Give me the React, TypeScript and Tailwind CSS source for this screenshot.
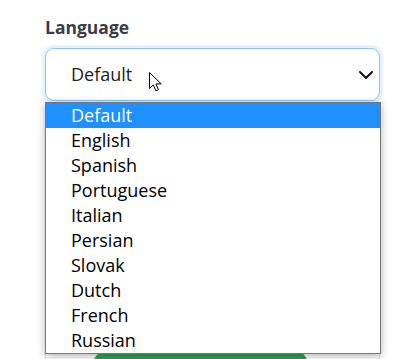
import React from 'react';

const languages = [
  'Default',
  'English',
  'Spanish',
  'Portuguese',
  'Italian',
  'Persian',
  'Slovak',
  'Dutch',
  'French',
  'Russian',
];

const App = () => {
  return (
    <div className="relative w-[397px] h-[359px] overflow-hidden bg-white font-['Open_Sans',sans-serif]">
      <div className="pl-[45px] pr-[17px] pt-[15px]">
        <label className="block text-[17.5px] leading-[24px] font-bold text-[#393c49]">Language</label>

        {/* select, shown open */}
        <div className="relative mt-[9px]">
          <div className="flex h-[53px] items-center rounded-[9px] border border-[#8cc2f5] bg-white pl-[25px] text-[18px] text-[#222] shadow-[0_0_0_3px_rgba(140,194,245,0.22)]">
            Default
          </div>
          <svg className="absolute right-[7px] top-[23px]" width="14" height="8" viewBox="0 0 14 8" fill="none">
            <path d="M1 1l6 6 6-6" stroke="#111" strokeWidth="2" strokeLinecap="round" strokeLinejoin="round" />
          </svg>
          {/* mouse pointer */}
          <svg className="absolute left-[104px] top-[24px]" width="13" height="20" viewBox="0 0 13 20">
            <path d="M0.5 0.5v16l3.8-3.6 2.6 6 2.6-1.1-2.6-5.9h5.3z" fill="#fff" stroke="#000" strokeWidth="1" strokeLinejoin="round" />
          </svg>

          {/* content behind the open list */}
          <div className="mt-[4px] h-[270px] w-full border-x border-[#e2e2e2] pl-[47px]">
            <div className="mt-[249px] h-[30px] w-[215px] rounded-full bg-[#2ea352]" />
          </div>

          <ul className="absolute left-0 top-[54px] z-10 w-[336px] border border-[#767676] bg-white shadow-[0_2px_8px_rgba(0,0,0,0.3)]">
            {languages.map((lang, i) => (
              <li
                key={lang}
                className={
                  i === 0
                    ? 'h-[25px] pl-[25px] text-[18px] leading-[25px] bg-[#1e90ff] text-white'
                    : 'h-[25px] pl-[25px] text-[18px] leading-[25px] text-black'
                }
              >
                {lang}
              </li>
            ))}
          </ul>
        </div>
      </div>
    </div>
  );
};

export default App;
